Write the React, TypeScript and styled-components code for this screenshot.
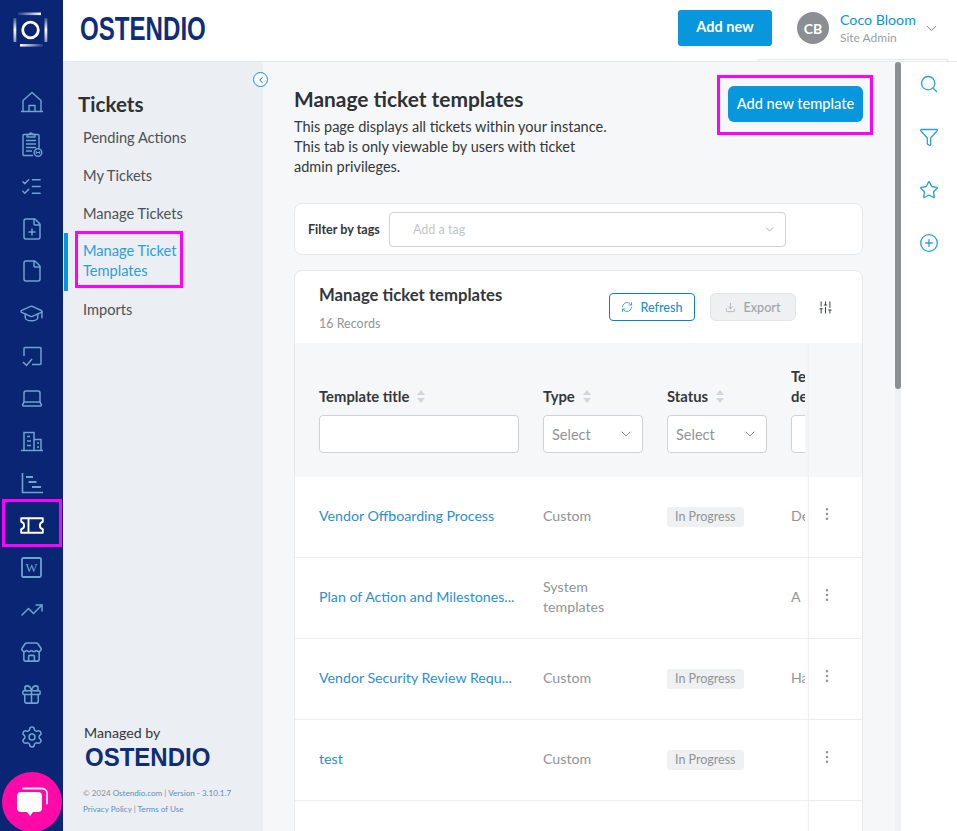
import React from 'react';
import styled, { createGlobalStyle, css } from 'styled-components';
import {
  ChevronDown,
  ChevronLeft,
  Download,
  File,
  FilePlus,
  Filter,
  Gift,
  GraduationCap,
  Laptop,
  ListChecks,
  PlusCircle,
  RefreshCw,
  Search,
  Settings,
  SlidersVertical,
  Star,
  Store,
  TrendingUp,
  EllipsisVertical,
} from 'lucide-react';

const GlobalStyle = createGlobalStyle`
  html, body {
    margin: 0;
    height: 100%;
    overflow: hidden;
  }
  body {
    font-family: 'Lato', 'Noto Sans', sans-serif;
    color: #33373b;
  }
  * {
    box-sizing: border-box;
  }
`;

const HomeIcon = () => (
  <svg width="24" height="24" viewBox="0 0 24 24" fill="none" stroke="currentColor" strokeWidth="1.4" strokeLinejoin="round">
    <path d="M1 21.5h22M3 21.5V10.500L12 2.500l9 8v11M9 21.500V15.500h6v6" />
  </svg>
);

const TaskIcon = () => (
  <svg width="24" height="28" viewBox="0 0 24 28" fill="none" stroke="currentColor" strokeWidth="1.4" strokeLinejoin="round">
    <path d="M13 25.500H4a1 1 0 0 1-1-1V5.500a1 1 0 0 1 1-1h14a1 1 0 0 1 1 1V18" />
    <path d="M7 7V4.500h2.500a1.500 1.500 0 0 1 3 0H15V7z" />
    <path d="M6 10.500h10M6 14h10M6 17.500h10M6 21h6" />
    <circle cx="18" cy="22.500" r="3.800" />
    <path d="M16.300 21v3M19.700 21v3M16.300 22.500h3.400" strokeWidth="1" />
  </svg>
);

const BoxCheckIcon = () => (
  <svg width="24" height="24" viewBox="0 0 24 24" fill="none" stroke="currentColor" strokeWidth="1.5">
    <path d="M4 12V4.500a1 1 0 0 1 1-1h15a1 1 0 0 1 1 1v15a1 1 0 0 1-1 1h-8" />
    <path d="M3 18l3.500 3.500L12 15" />
  </svg>
);

const BuildingIcon = () => (
  <svg width="24" height="24" viewBox="0 0 24 24" fill="none" stroke="currentColor" strokeWidth="1.5">
    <path d="M1 21.500h22M4 21.500V3.500h10v18M14 10.500h7v11" />
    <path d="M7 7.500h3M7 12h4M7 16.500h4M17 14h2M17 18h2" />
  </svg>
);

const GanttIcon = () => (
  <svg width="24" height="24" viewBox="0 0 24 24" fill="none" stroke="currentColor" strokeWidth="1.6">
    <path d="M2.500 2v19.500H23" />
    <path d="M6 6h7M8.500 11h8M12 16h9" strokeWidth="2" />
  </svg>
);

const TicketIcon = () => (
  <svg width="24" height="17" viewBox="0 0 24 17" fill="none" stroke="#fff" strokeWidth="1.900" strokeLinejoin="round">
    <path d="M1.200 1.200h21.600v3.600a3.800 3.800 0 0 0 0 7.400v3.600H1.200v-3.600a3.800 3.800 0 0 0 0-7.400z" />
    <path d="M8.500 1.200v14.600" />
  </svg>
);

const WikiIcon = () => (
  <svg width="21" height="21" viewBox="0 0 21 21" fill="none">
    <rect x="1" y="1" width="19" height="19" rx="1.500" stroke="currentColor" strokeWidth="1.800" />
    <text x="10.500" y="15" textAnchor="middle" fontSize="12.500" fontFamily="Liberation Serif, serif" fill="currentColor">
      W
    </text>
  </svg>
);

const RailLogo = () => (
  <svg width="36" height="36" viewBox="0 0 36 36" fill="none">
    <defs>
      <linearGradient id="fadeIn" x1="0" x2="1" y1="0" y2="0">
        <stop offset="0" stopColor="#fff" stopOpacity="0.1" />
        <stop offset="1" stopColor="#fff" />
      </linearGradient>
      <linearGradient id="fadeOut" x1="1" x2="0" y1="0" y2="0">
        <stop offset="0" stopColor="#fff" stopOpacity="0.1" />
        <stop offset="1" stopColor="#fff" />
      </linearGradient>
      <linearGradient id="fadeDown" x1="0" x2="0" y1="0" y2="1">
        <stop offset="0" stopColor="#fff" stopOpacity="0.2" />
        <stop offset="0.5" stopColor="#fff" />
        <stop offset="1" stopColor="#fff" stopOpacity="0.5" />
      </linearGradient>
    </defs>
    <circle cx="17.500" cy="19" r="7.800" stroke="#fff" strokeWidth="2.800" />
    <rect x="5" y="1.500" width="23" height="2.600" fill="url(#fadeIn)" />
    <rect x="7" y="33" width="23" height="2.600" fill="url(#fadeOut)" />
    <rect x="0.500" y="7" width="2.800" height="24" fill="url(#fadeDown)" />
    <rect x="31.500" y="7" width="2.800" height="24" fill="url(#fadeDown)" />
  </svg>
);

const ChatIcon = () => (
  <svg width="34" height="34" viewBox="0 0 34 34">
    <path d="M8 3.500h19a5 5 0 0 1 5 5v10" fill="none" stroke="#fff" strokeWidth="1.800" strokeLinecap="round" opacity="0.9" />
    <path
      d="M6 7h17a4 4 0 0 1 4 4v12a4 4 0 0 1-4 4h-5l-3 4-3-4H6a4 4 0 0 1-4-4V11a4 4 0 0 1 4-4z"
      fill="#fff"
    />
  </svg>
);

const railItems: { key: string; icon: React.ReactNode; active?: boolean }[] = [
  { key: 'home', icon: <HomeIcon /> },
  { key: 'tasks', icon: <TaskIcon /> },
  { key: 'checks', icon: <ListChecks size={23} strokeWidth={1.5} /> },
  { key: 'new-file', icon: <FilePlus size={24} strokeWidth={1.5} /> },
  { key: 'file', icon: <File size={24} strokeWidth={1.5} /> },
  { key: 'training', icon: <GraduationCap size={25} strokeWidth={1.4} /> },
  { key: 'review', icon: <BoxCheckIcon /> },
  { key: 'laptop', icon: <Laptop size={24} strokeWidth={1.5} /> },
  { key: 'vendors', icon: <BuildingIcon /> },
  { key: 'gantt', icon: <GanttIcon /> },
  { key: 'tickets', icon: <TicketIcon />, active: true },
  { key: 'wiki', icon: <WikiIcon /> },
  { key: 'trends', icon: <TrendingUp size={24} strokeWidth={1.5} /> },
  { key: 'store', icon: <Store size={23} strokeWidth={1.6} /> },
  { key: 'gift', icon: <Gift size={23} strokeWidth={1.6} /> },
  { key: 'settings', icon: <Settings size={24} strokeWidth={1.5} /> },
];

const templates = [
  { title: 'Vendor Offboarding Process', type: 'Custom', status: 'In Progress', desc: 'De' },
  { title: 'Plan of Action and Milestones...', type: 'System templates', status: '', desc: 'A' },
  { title: 'Vendor Security Review Requ...', type: 'Custom', status: 'In Progress', desc: 'Ha' },
  { title: 'test', type: 'Custom', status: 'In Progress', desc: '' },
  { title: '', type: '', status: '', desc: '' },
];

const navLinks = ['Pending Actions', 'My Tickets', 'Manage Tickets', 'Manage Ticket Templates', 'Imports'];

const App: React.FC = () => {
  return (
    <Page>
      <GlobalStyle />
      <Rail>
        <RailTop>
          <RailLogo />
        </RailTop>
        <RailList>
          {railItems.map((item) => (
            <RailItem key={item.key} $active={item.active}>
              {item.icon}
            </RailItem>
          ))}
        </RailList>
      </Rail>
      <ChatBubble>
        <ChatIcon />
      </ChatBubble>

      <Body>
        <TopBar>
          <BrandBox>
            <Brand>OSTENDIO</Brand>
          </BrandBox>
          <TopActions>
            <AddNew>Add new</AddNew>
            <Avatar>CB</Avatar>
            <UserInfo>
              <UserName>Coco Bloom</UserName>
              <UserRole>Site Admin</UserRole>
            </UserInfo>
            <ChevronDown size={17} color="#7d8388" strokeWidth={1.4} />
          </TopActions>
          <HiddenMenuEdge />
        </TopBar>

        <Content>
          <SideNav>
            <CollapseButton>
              <ChevronLeft size={10} strokeWidth={2.5} />
            </CollapseButton>
            <SideTitle>Tickets</SideTitle>
            <NavList>
              {navLinks.map((link) => {
                const active = link === 'Manage Ticket Templates';
                return (
                  <NavItem key={link} $active={active}>
                    {active ? <Highlighted>{link}</Highlighted> : link}
                  </NavItem>
                );
              })}
            </NavList>
            <SideFooter>
              <ManagedBy>Managed by</ManagedBy>
              <FooterBrand>OSTENDIO</FooterBrand>
              <Legal>
                © 2024 <LegalLink>Ostendio.com</LegalLink> | <LegalLink>Version - 3.10.1.7</LegalLink>
              </Legal>
              <Legal>
                <LegalLink>Privacy Policy</LegalLink> | <LegalLink>Terms of Use</LegalLink>
              </Legal>
            </SideFooter>
          </SideNav>

          <Main>
            <PageHead>
              <div>
                <PageTitle>Manage ticket templates</PageTitle>
                <PageIntro>
                  This page displays all tickets within your instance.
                  <br />
                  This tab is only viewable by users with ticket
                  <br />
                  admin privileges.
                </PageIntro>
              </div>
              <AddTemplate>Add new template</AddTemplate>
            </PageHead>

            <FilterCard>
              <FilterLabel>Filter by tags</FilterLabel>
              <TagSelect>
                Add a tag
                <ChevronDown size={13} color="#9aa0a5" strokeWidth={1.5} />
              </TagSelect>
            </FilterCard>

            <TableCard>
              <TableBar>
                <div>
                  <TableTitle>Manage ticket templates</TableTitle>
                  <Records>16 Records</Records>
                </div>
                <BarActions>
                  <RefreshButton>
                    <RefreshCw size={12} strokeWidth={1.6} />
                    Refresh
                  </RefreshButton>
                  <ExportButton>
                    <Download size={11} strokeWidth={1.6} />
                    Export
                  </ExportButton>
                  <SlidersVertical size={15} color="#33373b" strokeWidth={1.5} />
                </BarActions>
              </TableBar>

              <HeadRow>
                <TitleCell $head>
                  <HeadLabel>
                    Template title <SortArrows />
                  </HeadLabel>
                  <TextField />
                </TitleCell>
                <TypeCell $head>
                  <HeadLabel>
                    Type <SortArrows />
                  </HeadLabel>
                  <SelectField>
                    Select
                    <ChevronDown size={16} color="#7d8388" strokeWidth={1.4} />
                  </SelectField>
                </TypeCell>
                <TypeCell $head>
                  <HeadLabel>
                    Status <SortArrows />
                  </HeadLabel>
                  <SelectField>
                    Select
                    <ChevronDown size={16} color="#7d8388" strokeWidth={1.4} />
                  </SelectField>
                </TypeCell>
                <DescCell $head>
                  <DescHead>
                    Template
                    <br />
                    description
                  </DescHead>
                  <DescField />
                </DescCell>
                <ActionCell />
              </HeadRow>

              {templates.map((row, index) => (
                <DataRow key={index}>
                  <TitleCell>{row.title && <RowLink>{row.title}</RowLink>}</TitleCell>
                  <TypeCell>
                    <RowText>{row.type}</RowText>
                  </TypeCell>
                  <TypeCell>{row.status && <StatusTag>{row.status}</StatusTag>}</TypeCell>
                  <DescCell>
                    <RowText>{row.desc}</RowText>
                  </DescCell>
                  <ActionCell>{row.title && <EllipsisVertical size={16} color="#8f9499" strokeWidth={1.8} />}</ActionCell>
                </DataRow>
              ))}
            </TableCard>
          </Main>

          <Scrollbar>
            <ScrollThumb />
          </Scrollbar>

          <ToolRail>
            <Search size={20} strokeWidth={1.6} />
            <Filter size={20} strokeWidth={1.6} />
            <Star size={20} strokeWidth={1.6} />
            <PlusCircle size={20} strokeWidth={1.6} />
          </ToolRail>
        </Content>
      </Body>
    </Page>
  );
};

const SortArrows = () => (
  <SortGlyph width="8" height="13" viewBox="0 0 8 13">
    <path d="M4 0l4 5H0zM4 13L0 8h8z" fill="#d3d6d9" />
  </SortGlyph>
);

const Page = styled.div`
  display: flex;
  width: 957px;
  height: 831px;
  overflow: hidden;
  position: relative;
  background: #fff;
`;

const Rail = styled.nav`
  width: 63px;
  flex: none;
  background: #0b2575;
  color: #6ea4cd;
`;

const RailTop = styled.div`
  height: 81px;
  padding: 11px 0 0 13px;
`;

const RailList = styled.div`
  display: flex;
  flex-direction: column;
`;

const RailItem = styled.div<{ $active?: boolean }>`
  position: relative;
  height: 42.3px;
  display: flex;
  align-items: center;
  justify-content: center;

  ${(p) =>
    p.$active &&
    css`
      &::after {
        content: '';
        position: absolute;
        left: 2px;
        right: 1px;
        top: -5px;
        bottom: -1px;
        border: 3px solid #ff00ff;
      }
    `}
`;

const ChatBubble = styled.div`
  position: absolute;
  left: 2px;
  top: 772px;
  width: 60px;
  height: 60px;
  border-radius: 50%;
  background: #ff0aa8;
  display: flex;
  align-items: center;
  justify-content: center;
`;

const Body = styled.div`
  flex: 1;
  min-width: 0;
  display: flex;
  flex-direction: column;
`;

const TopBar = styled.header`
  height: 62px;
  flex: none;
  display: flex;
  align-items: flex-start;
  justify-content: space-between;
  position: relative;
  background: #fff;
  border-bottom: 1px solid #e6e8ea;
`;

const BrandBox = styled.div`
  padding: 10px 0 0 17px;
`;

const Brand = styled.div`
  font-family: 'Liberation Sans', sans-serif;
  font-weight: 700;
  font-size: 33px;
  line-height: 38px;
  color: #0f2d78;
  transform: scaleX(0.73);
  transform-origin: left center;
`;

const TopActions = styled.div`
  display: flex;
  align-items: center;
  padding: 10px 17px 0 0;
`;

const AddNew = styled.button`
  width: 94px;
  height: 36px;
  border: none;
  border-radius: 3px;
  background: #0896dc;
  color: #fff;
  font: 700 14.5px 'Lato', sans-serif;
  margin-right: 25px;
  padding: 0 0 4px;
`;

const Avatar = styled.div`
  width: 32px;
  height: 32px;
  border-radius: 50%;
  background: #8b8f93;
  color: #fff;
  font-weight: 700;
  font-size: 14px;
  display: flex;
  align-items: center;
  justify-content: center;
  margin-right: 11px;
`;

const UserInfo = styled.div`
  width: 83px;
`;

const UserName = styled.div`
  color: #0896dc;
  font-size: 14.2px;
  line-height: 20px;
`;

const UserRole = styled.div`
  color: #9a9fa4;
  font-size: 12px;
  line-height: 16px;
`;

const HiddenMenuEdge = styled.div`
  position: absolute;
  right: 8px;
  bottom: -1px;
  width: 192px;
  height: 3px;
  border: 1px solid #e3e5e7;
  border-bottom: none;
  border-radius: 3px 3px 0 0;
`;

const Content = styled.div`
  flex: 1;
  min-height: 0;
  display: flex;
`;

const SideNav = styled.aside`
  position: relative;
  width: 200px;
  flex: none;
  display: flex;
  flex-direction: column;
  background: #ebeef2;
`;

const CollapseButton = styled.div`
  position: absolute;
  top: 10px;
  right: -5px;
  width: 15px;
  height: 15px;
  border-radius: 50%;
  background: #fff;
  border: 1px solid #0896dc;
  color: #0896dc;
  display: flex;
  align-items: center;
  justify-content: center;
`;

const SideTitle = styled.h2`
  margin: 29px 0 0 15px;
  font-size: 20.6px;
  line-height: 26px;
  font-weight: 700;
  color: #2d3135;
`;

const NavList = styled.div`
  display: flex;
  flex-direction: column;
  margin-top: 3px;
`;

const NavItem = styled.div<{ $active?: boolean }>`
  position: relative;
  padding: 8px 20px;
  width: 135px;
  min-height: 38px;
  font-size: 14.6px;
  line-height: 20px;
  white-space: ${(p) => (p.$active ? 'normal' : 'nowrap')};
  color: ${(p) => (p.$active ? '#2a9fe0' : '#4c5156')};

  ${(p) =>
    p.$active &&
    css`
      margin: -1px 0 1px;
      padding-bottom: 10px;
      &::before {
        content: '';
        position: absolute;
        left: 1px;
        top: 0;
        bottom: 0;
        width: 4px;
        background: #0896dc;
      }
    `}
`;

const Highlighted = styled.span`
  position: relative;
  display: block;
  width: 100px;

  &::after {
    content: '';
    position: absolute;
    left: -8px;
    right: 0;
    top: -10px;
    bottom: -7px;
    border: 3px solid #ff00ff;
  }
`;

const SideFooter = styled.div`
  margin-top: auto;
  padding: 0 0 14px 21px;
`;

const ManagedBy = styled.div`
  font-size: 14.2px;
  line-height: 20px;
  color: #33373b;
  margin-bottom: 1px;
`;

const FooterBrand = styled.div`
  font-family: 'Liberation Sans', sans-serif;
  font-weight: 700;
  font-size: 25px;
  line-height: 26px;
  color: #0f2d78;
  margin: 0 0 15px 1px;
  transform: scaleX(0.96);
  transform-origin: left center;
`;

const Legal = styled.div`
  font-size: 8.1px;
  line-height: 16px;
  margin-left: -1px;
  color: #8b9095;
  white-space: nowrap;
`;

const LegalLink = styled.span`
  color: #5d8ec0;
`;

const Main = styled.main`
  width: 632px;
  flex: none;
  overflow: hidden;
  background: #f6f7f9;
  padding: 14px 32px 0 31px;
`;

const PageHead = styled.div`
  display: flex;
  justify-content: space-between;
  align-items: flex-start;
`;

const PageTitle = styled.h1`
  margin: 10px 0 5px;
  font-size: 20.9px;
  line-height: 26px;
  font-weight: 700;
  color: #2d3135;
`;

const PageIntro = styled.p`
  margin: 0;
  font-size: 14.5px;
  line-height: 20px;
  color: #33373b;
`;

const AddTemplate = styled.button`
  position: relative;
  width: 135px;
  height: 36px;
  margin: 10px 0 0 0;
  padding: 0 0 2px;
  border: none;
  border-radius: 6px;
  background: #0896dc;
  color: #fff;
  font: 500 14.6px 'Lato', sans-serif;

  &::after {
    content: '';
    position: absolute;
    left: -11px;
    right: -10px;
    top: -11px;
    bottom: -13px;
    border: 3px solid #ff00ff;
  }
`;

const FilterCard = styled.div`
  height: 52px;
  margin-top: 26px;
  display: flex;
  align-items: center;
  padding-left: 13px;
  background: #fff;
  border: 1px solid #e6e8ea;
  border-radius: 8px;
`;

const FilterLabel = styled.div`
  width: 81px;
  font-size: 12.6px;
  font-weight: 700;
  color: #33373b;
  white-space: nowrap;
`;

const TagSelect = styled.div`
  width: 397px;
  height: 35px;
  display: flex;
  align-items: center;
  justify-content: space-between;
  padding: 0 9px 0 23px;
  background: #fff;
  border: 1px solid #cfd2d5;
  border-radius: 4px;
  font-size: 12.5px;
  color: #c3c6c9;
`;

const TableCard = styled.section`
  margin-top: 15px;
  background: #fff;
  border: 1px solid #e6e8ea;
  border-radius: 8px 8px 0 0;
`;

const TableBar = styled.div`
  height: 72px;
  display: flex;
  justify-content: space-between;
  padding: 13px 29px 0 24px;
`;

const TableTitle = styled.div`
  font-size: 16.7px;
  line-height: 22px;
  font-weight: 700;
  color: #33373b;
`;

const Records = styled.div`
  margin-top: 10px;
  font-size: 12.5px;
  line-height: 16px;
  color: #90959a;
`;

const BarActions = styled.div`
  display: flex;
  align-items: center;
  align-self: flex-start;
  margin-top: 9px;
  height: 28px;
`;

const RefreshButton = styled.button`
  display: flex;
  align-items: center;
  justify-content: center;
  gap: 7px;
  width: 86px;
  height: 28px;
  margin-right: 15px;
  background: #fff;
  border: 1px solid #0a83c0;
  border-radius: 4px;
  color: #2a8fcd;
  font: 500 12.6px 'Lato', sans-serif;
`;

const ExportButton = styled.button`
  display: flex;
  align-items: center;
  justify-content: center;
  gap: 7px;
  width: 86px;
  height: 28px;
  margin-right: 22px;
  background: #eff0f1;
  border: 1px solid #e2e4e6;
  border-radius: 6px;
  color: #a0a4a8;
  font: 500 12.6px 'Lato', sans-serif;
`;

const HeadRow = styled.div`
  display: flex;
  height: 134px;
  padding-left: 24px;
  background: #f6f7f9;
`;

const DataRow = styled.div`
  display: flex;
  height: 81px;
  align-items: center;
  padding-left: 24px;
  border-bottom: 1px solid #eceef0;
`;

const headCell = css<{ $head?: boolean }>`
  ${(p) =>
    p.$head
      ? css`
          align-self: flex-end;
          padding-bottom: 24px;
        `
      : css`
          align-self: center;
          margin-top: -3px;
        `}
`;

const TitleCell = styled.div<{ $head?: boolean }>`
  width: 224px;
  flex: none;
  padding-right: 24px;
  ${headCell}
`;

const TypeCell = styled.div<{ $head?: boolean }>`
  width: 124px;
  flex: none;
  padding-right: 24px;
  ${headCell}
`;

const DescCell = styled.div<{ $head?: boolean }>`
  flex: 1;
  min-width: 0;
  overflow: hidden;
  margin-right: 3px;
  ${headCell}
`;

const ActionCell = styled.div`
  width: 54px;
  align-self: stretch;
  flex: none;
  display: flex;
  justify-content: flex-start;
  padding: 29px 0 0 10px;
  border-left: 1px solid #eff0f2;
  box-shadow: -2px 0 3px rgba(0, 0, 0, 0.015);
`;

const HeadLabel = styled.div`
  display: flex;
  align-items: center;
  gap: 8px;
  height: 20px;
  margin-bottom: 9px;
  font-size: 14.8px;
  font-weight: 700;
  color: #33373b;
  white-space: nowrap;
`;

const SortGlyph = styled.svg`
  flex: none;
`;

const TextField = styled.div`
  height: 38px;
  background: #fff;
  border: 1px solid #cfd2d5;
  border-radius: 4px;
`;

const SelectField = styled.div`
  height: 38px;
  display: flex;
  align-items: center;
  justify-content: space-between;
  padding: 0 8px;
  background: #fff;
  border: 1px solid #cfd2d5;
  border-radius: 4px;
  font-size: 14.5px;
  color: #8f9499;
`;

const DescHead = styled.div`
  font-size: 14.8px;
  line-height: 20px;
  font-weight: 700;
  color: #33373b;
  margin-bottom: 9px;
  white-space: nowrap;
`;

const DescField = styled.div`
  width: 120px;
  height: 38px;
  background: #fff;
  border: 1px solid #cfd2d5;
  border-radius: 4px;
`;

const RowLink = styled.div`
  font-size: 14.2px;
  line-height: 20px;
  color: #2a8fd8;
  white-space: nowrap;
`;

const RowText = styled.div`
  font-size: 14.2px;
  line-height: 20px;
  color: #8f9499;
`;

const StatusTag = styled.span`
  display: inline-block;
  padding: 2px 8px;
  border-radius: 3px;
  background: #eff0f1;
  font-size: 12.5px;
  line-height: 16px;
  color: #8f9499;
`;

const Scrollbar = styled.div`
  width: 6px;
  flex: none;
  background: #eef0f2;
`;

const ScrollThumb = styled.div`
  height: 327px;
  background: #8b8f93;
  border-radius: 3px;
`;

const ToolRail = styled.div`
  flex: 1;
  display: flex;
  flex-direction: column;
  align-items: center;
  gap: 33px;
  padding-top: 12px;
  background: #fff;
  color: #2a9fe0;
`;

export default App;
